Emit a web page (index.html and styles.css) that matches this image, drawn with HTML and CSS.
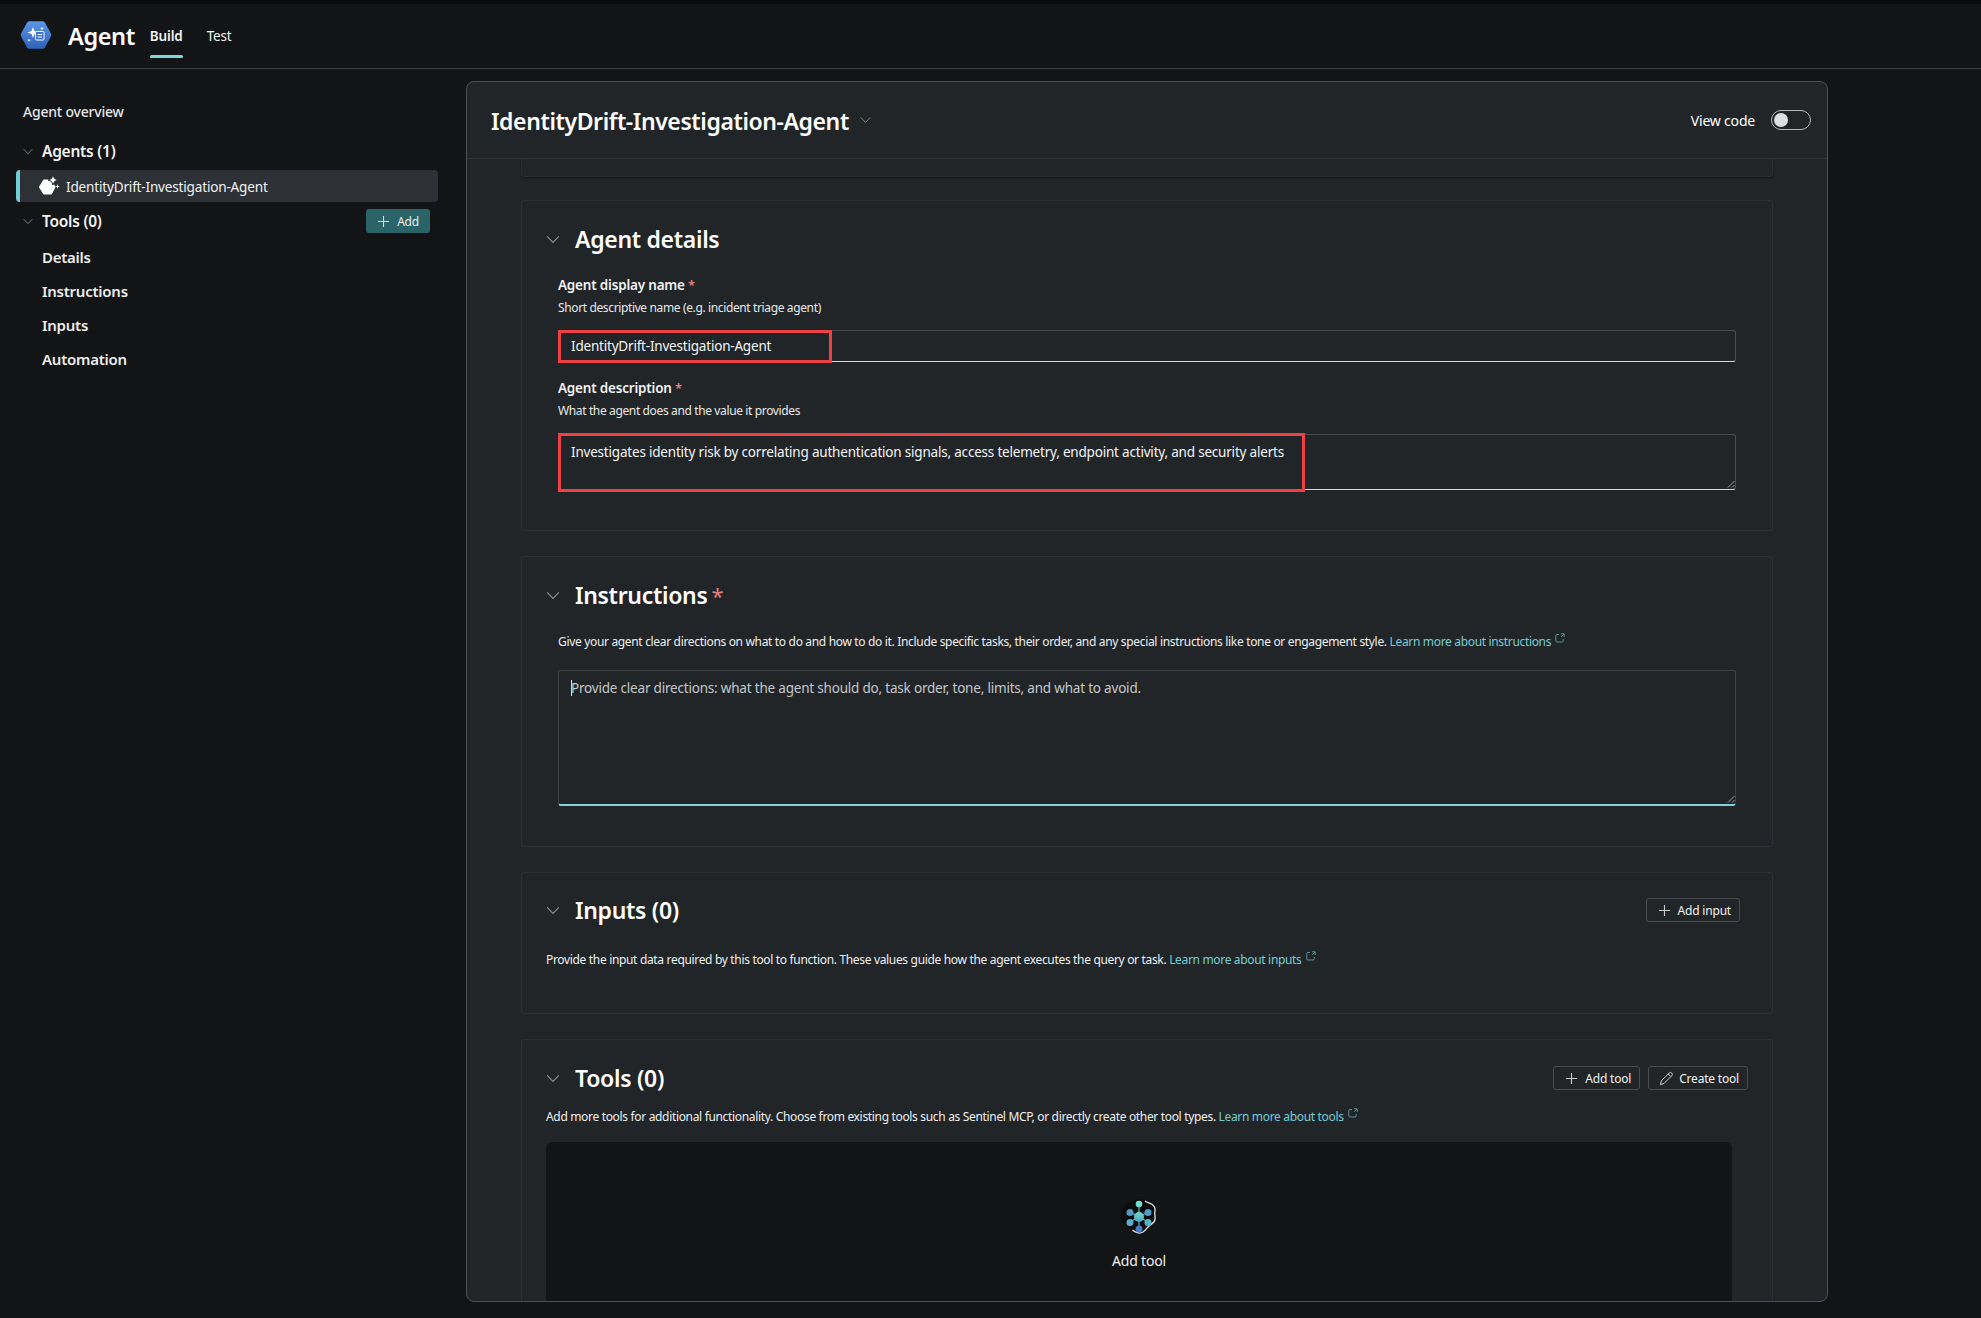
FILE: index.html
```html
<!DOCTYPE html>
<html lang="en">
<head>
<meta charset="utf-8">
<title>Agent</title>
<link rel="stylesheet" href="styles.css">
</head>
<body>
<svg class="defs" width="0" height="0" aria-hidden="true">
  <defs>
    <symbol id="chev" viewBox="0 0 12 8"><path d="M.8 1.2 6 6.6l5.2-5.4" fill="none" stroke="currentColor" stroke-width="1"/></symbol>
    <symbol id="plus" viewBox="0 0 14 14"><path d="M7 1v12M1 7h12" fill="none" stroke="currentColor" stroke-width="1.2"/></symbol>
    <symbol id="ext" viewBox="0 0 10 10"><path d="M4 1.5H2A1.2 1.2 0 0 0 .8 2.7v5.1A1.2 1.2 0 0 0 2 9h5a1.2 1.2 0 0 0 1.2-1.2V6M6 .8h3.2V4M9 1 6.2 3.8" fill="none" stroke="currentColor" stroke-width=".8"/></symbol>
    <symbol id="grip" viewBox="0 0 8 8"><path d="M1 7.5 7.5 1M5 7.5l2.5-2.5" fill="none" stroke="currentColor" stroke-width="1"/></symbol>
  </defs>
</svg>
<div class="topstrip"></div>
<header class="appbar">
  <svg class="logo" viewBox="0 0 32 30" width="32" height="30">
    <defs><linearGradient id="hexfill" x1="0" y1="0" x2="0" y2="1"><stop offset="0" stop-color="#5a96e8"/><stop offset="1" stop-color="#2f62b8"/></linearGradient></defs>
    <path d="M9.5 1.2h13q1.6 0 2.4 1.4l6 10.8q.8 1.6 0 3.2l-6 10.8q-.8 1.4-2.4 1.4h-13q-1.6 0-2.4-1.4l-6-10.8q-.8-1.6 0-3.200l6-10.800Q7.900 1.200 9.500 1.200z" fill="url(#hexfill)"/>
    <path d="M13 7l1.500 4 4 1.500-4 1.500-1.500 4-1.500-4-4-1.500 4-1.500z" fill="#fff"/>
    <rect x="15.500" y="11.500" width="8.500" height="8.500" rx="1.200" fill="#3d74cc" stroke="#fff" stroke-width="1"/>
    <path d="M17.500 14.500h4.500M17.500 17h4.500" stroke="#fff" stroke-width="1"/>
    <path d="M22 7v3M20.500 8.500h3M9 19v2.500M7.800 20.200h2.400" stroke="#fff" stroke-width=".8"/>
  </svg>
  <span class="appname">Agent</span>
  <nav class="tabs">
    <a class="tab active">Build</a>
    <a class="tab">Test</a>
  </nav>
</header>
<div class="main">
  <aside class="sidebar">
    <div class="overview">Agent overview</div>
    <div class="tree-head"><svg class="chev small"><use href="#chev"/></svg><span>Agents (1)</span></div>
    <div class="agent-row">
      <svg class="agent-icon" viewBox="0 0 22 20" width="22" height="20">
        <path d="M6 5.500h6.500l4 6.500-3.500 6.500H6L2 12z" fill="#fff" stroke="#fff" stroke-width="2" stroke-linejoin="round"/>
        <path d="M15 0l1.500 3.500L20 5l-3.500 1.500L15 10l-1.500-3.500L10 5l3.500-1.500z" fill="#fff" stroke="#2d3136" stroke-width="1"/>
        <path d="M19.500 9l.6 1.900 1.900.6-1.900.6-.6 1.900-.6-1.900-1.900-.6 1.900-.6z" fill="#fff"/>
      </svg>
      <span>IdentityDrift-Investigation-Agent</span>
    </div>
    <div class="tree-head tools-head">
      <svg class="chev small"><use href="#chev"/></svg><span>Tools (0)</span>
      <button class="add-primary"><svg class="plus"><use href="#plus"/></svg>Add</button>
    </div>
    <a class="nav-link">Details</a>
    <a class="nav-link">Instructions</a>
    <a class="nav-link">Inputs</a>
    <a class="nav-link">Automation</a>
  </aside>
  <section class="panel">
    <div class="panel-head">
      <h1>IdentityDrift-Investigation-Agent</h1>
      <svg class="chev title-chev"><use href="#chev"/></svg>
      <div class="viewcode">
        <span>View code</span>
        <span class="toggle"><span class="knob"></span></span>
      </div>
    </div>
    <div class="panel-body">
      <div class="card-stub"></div>

      <div class="card details">
        <div class="card-head"><svg class="chev"><use href="#chev"/></svg><h2>Agent details</h2></div>
        <div class="field">
          <div class="label">Agent display name <span class="req">*</span></div>
          <div class="hint">Short descriptive name (e.g. incident triage agent)</div>
          <div class="control name-control">IdentityDrift-Investigation-Agent<span class="redbox name-box"></span></div>
        </div>
        <div class="field desc-field">
          <div class="label">Agent description <span class="req">*</span></div>
          <div class="hint">What the agent does and the value it provides</div>
          <div class="control area desc-area">Investigates identity risk by correlating authentication signals, access telemetry, endpoint activity, and security alerts<span class="redbox desc-box"></span><svg class="grip"><use href="#grip"/></svg></div>
        </div>
      </div>

      <div class="card instructions">
        <div class="card-head"><svg class="chev"><use href="#chev"/></svg><h2>Instructions<span class="req big">*</span></h2></div>
        <p class="desc indented">Give your agent clear directions on what to do and how to do it. Include specific tasks, their order, and any special instructions like tone or engagement style. <a class="link">Learn more about instructions</a><svg class="ext"><use href="#ext"/></svg></p>
        <div class="control area focus placeholder"><span class="caret"></span>Provide clear directions: what the agent should do, task order, tone, limits, and what to avoid.<svg class="grip"><use href="#grip"/></svg></div>
      </div>

      <div class="card inputs">
        <div class="card-head"><svg class="chev"><use href="#chev"/></svg><h2>Inputs (0)</h2>
          <div class="actions input-actions"><button class="btn"><svg class="plus"><use href="#plus"/></svg>Add input</button></div>
        </div>
        <p class="desc">Provide the input data required by this tool to function. These values guide how the agent executes the query or task. <a class="link">Learn more about inputs</a><svg class="ext"><use href="#ext"/></svg></p>
      </div>

      <div class="card tools">
        <div class="card-head"><svg class="chev"><use href="#chev"/></svg><h2>Tools (0)</h2>
          <div class="actions">
            <button class="btn"><svg class="plus"><use href="#plus"/></svg>Add tool</button>
            <button class="btn create"><svg class="pencil" viewBox="0 0 16 16" width="15" height="15"><path d="M1.500 14.500 2.500 10.500 10.800 2.200a1.900 1.900 0 0 1 2.800 2.800L5.300 13.300z M9.800 3.200l2.800 2.800" fill="none" stroke="#d8dadc" stroke-width="1"/></svg>Create tool</button>
          </div>
        </div>
        <p class="desc tools-desc">Add more tools for additional functionality. Choose from existing tools such as Sentinel MCP, or directly create other tool types. <a class="link">Learn more about tools</a><svg class="ext"><use href="#ext"/></svg></p>
        <div class="empty">
          <svg class="tool-icon" viewBox="0 0 38 38" width="38" height="38">
            <defs><linearGradient id="hub" x1="0" y1="0" x2="0" y2="1"><stop offset="0" stop-color="#6fdcc8"/><stop offset="1" stop-color="#4aa6c8"/></linearGradient></defs>
            <path d="M19 1c5 0 6 2.500 10 3.500 4 1 7 5 6.500 9-.4 3 1.500 5 0 9.500-1.500 3.500-5 4.500-8 7-2.500 2.500-4 6-8.500 6-5 0-5.500-3.500-9.500-5.500C4.500 28 1 25 1 19S3 8 8 5s7-4 11-4z" fill="#0b0c0e"/>
            <path d="M25 3c3 2.500 7 1.500 9.500 6 1.500 3-.5 5.500.5 8.500.5 3.500-.5 7-3.500 8.500-3 1.500-5 5.500-8.500 8-3.500 2-8 .5-10.500-2" fill="none" stroke="#d8dcdc" stroke-width="1.400"/>
            <path d="M19 8v12M19 19l-9-5M19 19l9-5M19 19l-9 5M19 19l9 5M19 19v11" stroke="#5cb4c4" stroke-width="1.200"/>
            <circle cx="19" cy="6" r="3.300" fill="#6fe0c8"/>
            <circle cx="10" cy="14.500" r="3.500" fill="#4f9ac8"/>
            <circle cx="28" cy="14.500" r="3.500" fill="#4f9ac8"/>
            <circle cx="10" cy="24.500" r="3.500" fill="#58b0c4"/>
            <circle cx="28" cy="24.500" r="3.500" fill="#58b0c4"/>
            <circle cx="19" cy="31" r="3.500" fill="#4878c8"/>
            <circle cx="19" cy="19" r="5" fill="url(#hub)"/>
          </svg>
          <div class="empty-label">Add tool</div>
        </div>
      </div>
    </div>
  </section>
</div>
</body>
</html>
```
FILE: styles.css
```css
* { box-sizing: border-box; }
html, body { margin: 0; height: 100%; }
body {
  width: 1981px;
  height: 1318px;
  overflow: hidden;
  background: #121416;
  color: #fff;
  font-family: "Noto Sans", "Open Sans", sans-serif;
  font-size: 13px;
  letter-spacing: -.2px;
  display: flex;
  flex-direction: column;
}
.defs { position: absolute; }
h1, h2, p { margin: 0; }
svg { display: block; flex: none; }
button { font: inherit; letter-spacing: inherit; color: inherit; cursor: pointer; }

.topstrip { height: 4px; background: #0a0b0c; flex: none; }
.appbar {
  height: 65px;
  flex: none;
  display: flex;
  align-items: center;
  padding-left: 20px;
  border-bottom: 1px solid #3a3f45;
}
.logo { margin-top: -3px; }
.appname { margin-left: 16px; font-size: 23.500px; font-weight: 600; letter-spacing: -.4px; color: #fff; }
.tabs { display: flex; gap: 24px; margin-left: 15px; align-self: stretch; }
.tab { position: relative; font-size: 13.500px; padding-top: 23px; color: #f2f3f3; letter-spacing: -.15px; }
.tab.active { font-weight: 600; }
.tab.active::after {
  content: "";
  position: absolute;
  left: 0; right: 0; top: 51px;
  height: 3px;
  border-radius: 2px;
  background: #7fd6dc;
}

.main { flex: 1; min-height: 0; display: flex; padding-bottom: 16px; }
.sidebar { width: 466px; flex: none; padding: 33px 0 0 16px; }
.overview { margin-left: 7px; font-size: 14px; font-weight: 500; color: #e4e5e6; height: 20px; line-height: 20px; }
.tree-head {
  display: flex; align-items: center;
  height: 24px; margin-top: 17px; padding-left: 7px; padding-right: 8px;
  width: 422px;
  font-size: 15.500px; font-weight: 600; letter-spacing: -.25px; color: #f2f3f3;
}
.chev { width: 14px; height: 9px; color: #8b9096; }
.chev.small { width: 10px; height: 7px; margin-right: 9px; }
.agent-row {
  width: 422px; height: 32px; margin-top: 7px;
  display: flex; align-items: center;
  background: #2d3136;
  border-left: 4px solid #6fcfd3;
  border-radius: 4px;
  padding-left: 18px;
  font-size: 13.600px; color: #f0f1f2;
}
.agent-icon { margin-right: 6px; margin-top: -2px; }
.tools-head { margin-top: 7px; }
.add-primary {
  margin-left: auto;
  width: 64px; height: 24px;
  display: flex; align-items: center; justify-content: center; gap: 7px;
  background: #2b6468; border: 0; border-radius: 3px;
  font-size: 12px; font-weight: 400; color: #e8f0f0;
}
.plus { width: 13px; height: 13px; color: #c8cccf; }
.add-primary .plus { color: #cfe0e0; }
.nav-link {
  display: block; height: 34px; line-height: 34px;
  padding-left: 26px;
  font-size: 15px; font-weight: 600; letter-spacing: -.25px; color: #eceded;
}
.tools-head + .nav-link { margin-top: 7px; }

.panel {
  flex: 1; margin: 12px 153px 0 0;
  min-width: 0;
  background: #212528;
  border: 1px solid #4d5156;
  border-radius: 8px;
  display: flex; flex-direction: column;
  overflow: hidden;
}
.panel-head {
  height: 77px; flex: none;
  display: flex; align-items: center;
  padding: 0 16px 0 24px;
  border-bottom: 1px solid #2f3338;
}
.panel-head h1 { font-size: 23px; font-weight: 600; letter-spacing: -.4px; padding-top: 1px; }
.title-chev { margin-left: 11px; margin-top: -1px; width: 11px; height: 8px; }
.viewcode { margin-left: auto; display: flex; align-items: center; gap: 16px; font-size: 14px; }
.toggle { width: 40px; height: 20px; border: 1px solid #b8bbbe; border-radius: 10px; display: flex; align-items: center; padding-left: 2px; }
.knob { width: 14px; height: 14px; border-radius: 50%; background: #dcdfe2; }

.panel-body { flex: 1; min-height: 0; overflow: hidden; padding: 0 54px; }
.card-stub {
  height: 18px;
  border: 1px solid #2a2e32; border-top: 0;
  border-radius: 0 0 4px 4px;
  box-shadow: 0 1px 2px rgba(0,0,0,.35);
}
.card {
  margin-top: 25px;
  border: 1px solid #2c3034;
  border-radius: 3px;
  padding: 0 0 0 24px;
}
.details { height: 331px; margin-top: 23px; }
.instructions { height: 291px; }
.inputs { height: 142px; }
.tools { height: 400px; }
.card-head { display: flex; align-items: center; height: 38px; margin-top: 19px; padding-right: 32px; }
.inputs .card-head { margin-top: 18px; }
.card-head .chev { width: 14px; height: 9px; margin-right: 15px; }
.card-head h2 { font-size: 23px; font-weight: 600; letter-spacing: -.3px; line-height: 38px; white-space: nowrap; }
.req { color: #e08080; font-size: 13px; }
.req.big { font-size: 22px; margin-left: 4px; font-weight: 400; }

.field { margin-left: 12px; margin-right: 36px; margin-top: 17px; }
.label { font-size: 13.500px; font-weight: 600; line-height: 20px; color: #f2f3f3; }
.hint { font-size: 12px; line-height: 18px; margin-top: 4px; color: #e8e9ea; letter-spacing: -.37px; }
.control {
  position: relative;
  height: 32px;
  margin-top: 13px;
  padding: 0 12px;
  line-height: 30px;
  font-size: 13.500px;
  color: #f4f5f5;
  border: 1px solid #4a4e53;
  border-bottom-color: #d6d8da;
  border-radius: 3px;
}
.area { line-height: 18px; padding-top: 8px; }
.desc-field { margin-top: 16px; }
.desc-area { height: 56px; margin-top: 14px; }
.redbox { position: absolute; border: 3px solid #ef4144; pointer-events: none; }
.name-box { left: -1px; top: -1px; width: 274px; height: 33px; }
.desc-box { left: -1px; top: -2px; width: 747px; height: 59px; }
.grip { position: absolute; right: 0; bottom: 1px; width: 8px; height: 8px; color: #9a9da0; }

.desc { font-size: 12px; line-height: 18px; color: #eeeff0; display: flex; white-space: pre-wrap; align-items: flex-start; letter-spacing: -.33px; }
.desc.indented { margin: 19px 0 0 12px; }
.instructions .control { margin: 19px 36px 0 12px; height: 136px; color: #c4c7ca; border-color: #3f4348; border-bottom: 2px solid #7fd6d8; padding-top: 8px; }
.caret { display: inline-block; width: 0; height: 16px; border-left: 1px solid #e0e2e4; vertical-align: -3px; margin-right: -1px; }
.link { color: #74cdd4; }
.ext { width: 10px; height: 10px; color: #5fb0b8; margin: 0 0 0 4px; }
.inputs .desc { margin-top: 22px; }
.tools-desc { margin-top: 11px; }

.actions { margin-left: auto; display: flex; gap: 8px; }
.tools .card-head { padding-right: 24px; }
.inputs .card-head { padding-right: 32px; }
.btn {
  height: 24px; padding: 0 8px 0 11px;
  display: flex; align-items: center; gap: 7px;
  background: transparent;
  border: 1px solid #4a4e53; border-radius: 3px;
  font-size: 12px; color: #f0f1f2;
}
.btn.create { padding-left: 10px; gap: 5px; }
.empty {
  margin: 16px 40px 0 0;
  height: 240px;
  background: #121416;
  border-radius: 6px;
  display: flex; flex-direction: column; align-items: center;
  padding-top: 56px;
}
.empty-label { margin-top: 15px; font-size: 14px; line-height: 20px; color: #f0f1f2; }
```
